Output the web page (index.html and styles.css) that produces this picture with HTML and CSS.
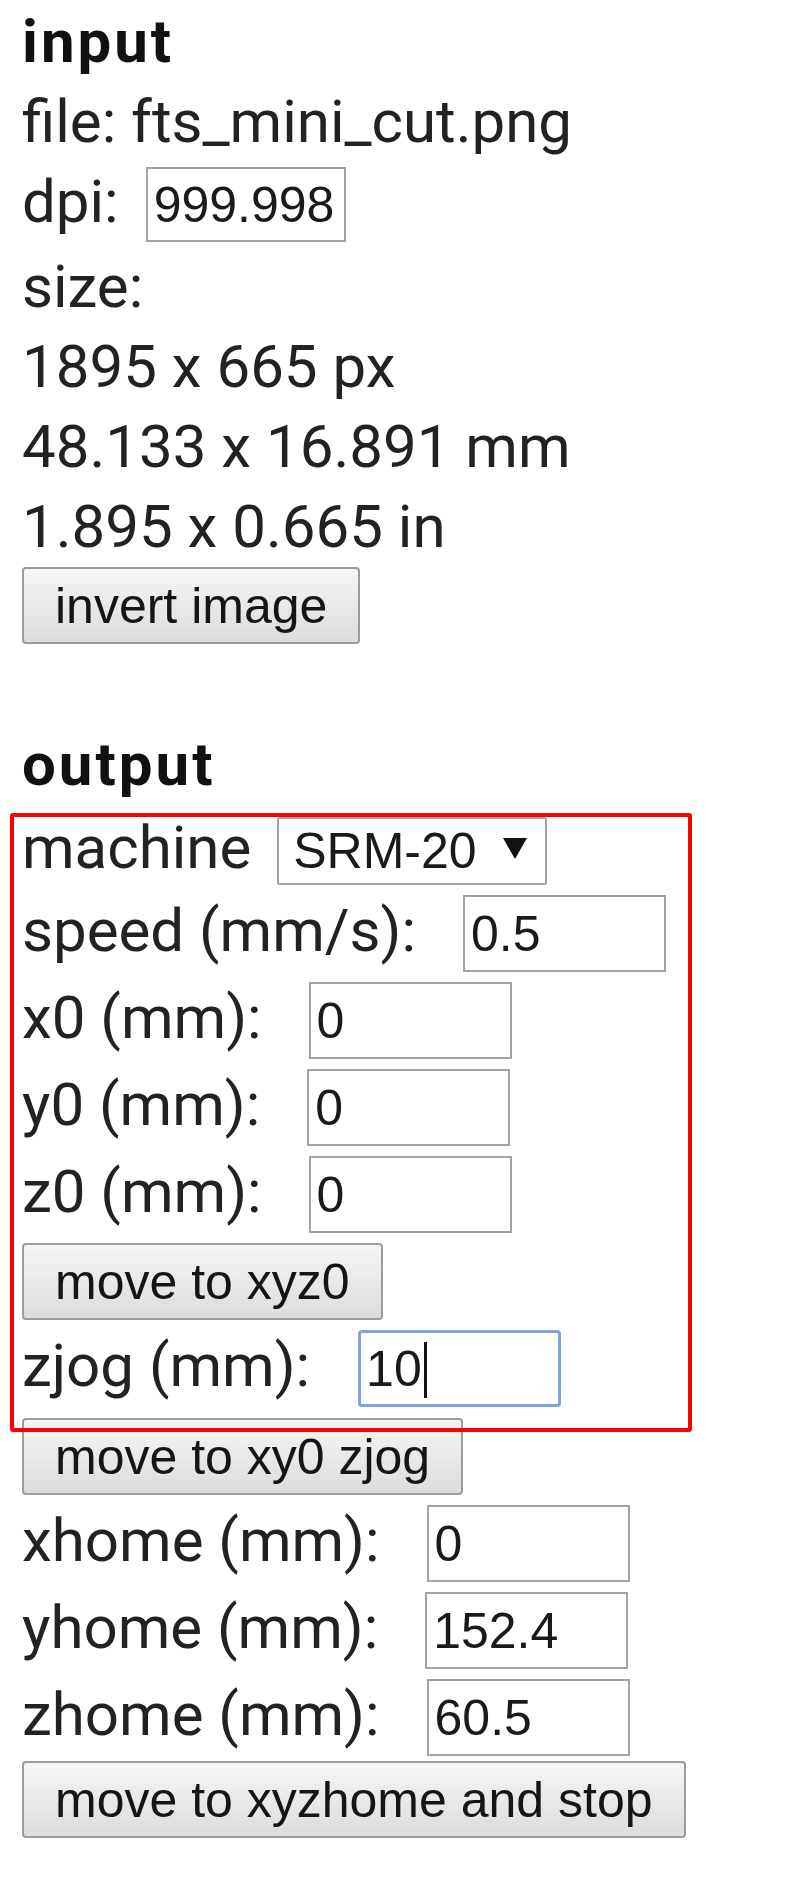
FILE: index.html
```html
<!DOCTYPE html>
<html lang="en">
<head>
  <meta charset="UTF-8">
  <title>png rml</title>
  <meta name="viewport" content="width=device-width, initial-scale=1.0">
  <link rel="stylesheet" href="styles.css">
</head>
<body>
  <div class="panel">
    <div class="title">input</div>
    <div class="line">file: fts_mini_cut.png</div>
    <div class="field dpi-row">
      <span class="lbl">dpi:</span><input class="num dpi" type="text" value="999.998">
    </div>
    <div class="line">size:</div>
    <div class="line">1895 x 665 px</div>
    <div class="line">48.133 x 16.891 mm</div>
    <div class="line">1.895 x 0.665 in</div>
    <div class="field"><button class="btn">invert image</button></div>

    <div class="title out">output</div>
    <div class="stack">
      <div class="marked">
        <div class="field">
          <span class="lbl">machine</span>
          <span class="pick"><select class="machine"><option>SRM-20</option><option>MDX-20</option></select></span>
        </div>
        <div class="field">
          <span class="lbl">speed (mm/s):</span><input class="num" type="text" value="0.5">
        </div>
        <div class="field">
          <span class="lbl">x0 (mm):</span><input class="num" type="text" value="0">
        </div>
        <div class="field">
          <span class="lbl">y0 (mm):</span><input class="num" type="text" value="0">
        </div>
        <div class="field">
          <span class="lbl">z0 (mm):</span><input class="num" type="text" value="0">
        </div>
        <div class="field"><button class="btn">move to xyz0</button></div>
        <div class="field">
          <span class="lbl">zjog (mm):</span>
          <span class="typing"><input class="num focused" type="text" value="10"><span class="caret"></span></span>
        </div>
      </div>
      <div class="field"><button class="btn">move to xy0 zjog</button></div>
      <div class="field">
        <span class="lbl">xhome (mm):</span><input class="num" type="text" value="0">
      </div>
      <div class="field">
        <span class="lbl">yhome (mm):</span><input class="num" type="text" value="152.4">
      </div>
      <div class="field">
        <span class="lbl">zhome (mm):</span><input class="num" type="text" value="60.5">
      </div>
      <div class="field last"><button class="btn">move to xyzhome and stop</button></div>
    </div>
  </div>
</body>
</html>
```

FILE: styles.css
```css
    body{
      margin: 0;
      padding: 2px 0 0 22px;
      background: #fff;
      color: #222;
      font-family: Roboto, "Noto Sans", sans-serif;
      font-size: 60px;
      line-height: 80px;
    }
    .panel{
      width: 760px;
    }
    .title{
      font-weight: 700;
      letter-spacing: 3px;
      color: #111;
    }
    .title.out{
      margin-top: 81px;
    }
    .line{
      white-space: nowrap;
    }
    .field{
      display: flex;
      align-items: baseline;
    }
    .dpi-row{
      margin: 5px 0;
    }
    .lbl{
      line-height: 60px;
      white-space: nowrap;
    }
    /*文字框*/
    .num{
      box-sizing: border-box;
      width: 203px;
      height: 77px;
      margin: 0 0 0 47px;
      padding: 0 6px;
      border: 2px solid #a3a3a3;
      border-radius: 0;
      background: #fff;
      color: #1a1a1a;
      font-family: "Liberation Sans", Arial, sans-serif;
      font-size: 50px;
      outline: none;
    }
    .num.dpi{
      width: 200px;
      height: 75px;
      margin-left: 27px;
    }
    .typing{
      position: relative;
      display: inline-flex;
      margin-left: 48px;
    }
    .typing .num{
      margin-left: 0;
    }
    .num.focused{
      border: 3px solid #7fa3dc;
      border-radius: 4px;
      padding-left: 5px;
    }
    .caret{
      position: absolute;
      left: 66px;
      top: 12px;
      width: 3px;
      height: 56px;
      background: #111;
    }
    .pick{
      position: relative;
      display: inline-flex;
      margin-left: 26px;
    }
    .pick::after{
      content: "";
      position: absolute;
      right: 20px;
      top: 21px;
      border-left: 12px solid transparent;
      border-right: 12px solid transparent;
      border-top: 21px solid #111;
      pointer-events: none;
    }
    .machine{
      -webkit-appearance: none;
      appearance: none;
      box-sizing: border-box;
      width: 270px;
      height: 68px;
      margin: 0;
      padding: 0 0 0 14px;
      border: 2px solid #a3a3a3;
      border-radius: 2px;
      background: #fff;
      color: #1a1a1a;
      font-family: "Liberation Sans", Arial, sans-serif;
      font-size: 50px;
    }
    .btn{
      box-sizing: border-box;
      height: 77px;
      margin: 0;
      padding: 0 31px;
      border: 2px solid #9c9c9c;
      border-radius: 4px;
      background: linear-gradient(#f5f5f5, #e9e9e9 50%, #dcdcdc);
      color: #151515;
      font-family: "Liberation Sans", Arial, sans-serif;
      font-size: 50px;
      white-space: nowrap;
    }
    .stack{
      display: flex;
      flex-direction: column;
      gap: 10px;
      margin-top: 8px;
    }
    /*紅框標記*/
    .marked{
      position: relative;
      display: flex;
      flex-direction: column;
      gap: 10px;
      box-sizing: border-box;
      width: 682px;
      margin: 0 0 -24px -12px;
      padding: 0 0 21px 8px;
      border: 4px solid #f00;
      border-radius: 3px;
    }
    .last{
      margin-top: -5px;
    }
```
